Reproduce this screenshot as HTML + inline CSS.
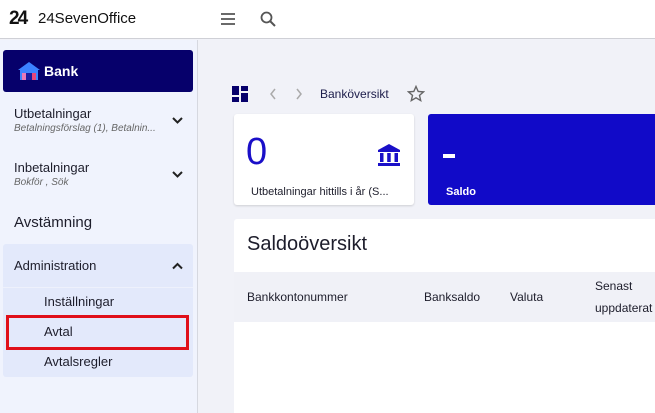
<!DOCTYPE html>
<html><head><meta charset="utf-8"><style>
*{margin:0;padding:0;box-sizing:border-box}
body{width:655px;height:413px;overflow:hidden;font-family:"Liberation Sans",sans-serif;background:#f1f2f8;position:relative;color:#1d1d2b}
.a{position:absolute;white-space:nowrap}
</style></head><body>
<div class="a" style="left:0;top:0;width:655px;height:39px;background:#fff;border-bottom:1px solid #cfd0d6"></div>
<div class="a" style="left:9px;top:8px;font-weight:bold;font-size:19px;letter-spacing:-2px;color:#111">24</div>
<div class="a" style="left:38px;top:10px;font-size:15px;color:#111">24SevenOffice</div>
<svg class="a" style="left:220px;top:12px" width="16" height="14"><path d="M1 2h14M1 7h14M1 12h14" stroke="#555" stroke-width="1.8"/></svg>
<svg class="a" style="left:260px;top:11px" width="16" height="16"><circle cx="6.5" cy="6.5" r="5" stroke="#555" stroke-width="1.8" fill="none"/><path d="M10 10l5 5" stroke="#555" stroke-width="2"/></svg>

<div class="a" style="left:0;top:40px;width:198px;height:373px;background:#f0f3fd;border-right:1px solid #d6d8e0"></div>
<div class="a" style="left:3px;top:50px;width:190px;height:42px;background:#06006b;border-radius:3px"></div>
<svg class="a" style="left:17px;top:61px" width="24" height="20"><path d="M1 9L12 1l11 8z" fill="#3c82ff"/><rect x="3" y="9" width="18" height="10" fill="#3c82ff"/><rect x="5" y="12" width="4" height="7" fill="#e879b8"/><rect x="15" y="12" width="4" height="7" fill="#e8457a"/><rect x="9" y="12" width="6" height="7" fill="#1a1aa0"/></svg>
<div class="a" style="left:44px;top:63px;font-size:14px;color:#fff;font-weight:bold">Bank</div>

<div class="a" style="left:14px;top:106px;font-size:13px">Utbetalningar</div>
<div class="a" style="left:14px;top:123px;font-size:10px;font-style:italic;color:#666">Betalningsförslag (1), Betalnin...</div>
<svg class="a" style="left:172px;top:117px" width="11" height="8"><path d="M1 1l4.5 4.5L10 1" stroke="#222" stroke-width="2" fill="none"/></svg>
<div class="a" style="left:14px;top:160px;font-size:13px">Inbetalningar</div>
<div class="a" style="left:14px;top:177px;font-size:10px;font-style:italic;color:#666">Bokför , Sök</div>
<svg class="a" style="left:172px;top:171px" width="11" height="8"><path d="M1 1l4.5 4.5L10 1" stroke="#222" stroke-width="2" fill="none"/></svg>
<div class="a" style="left:14px;top:214px;font-size:15px">Avstämning</div>

<div class="a" style="left:3px;top:244px;width:190px;height:133px;background:#e3e9fb;border-radius:3px"></div>
<div class="a" style="left:3px;top:287px;width:190px;height:1px;background:#eef1fc"></div>
<div class="a" style="left:14px;top:258px;font-size:13px">Administration</div>
<svg class="a" style="left:172px;top:262px" width="11" height="8"><path d="M1 6.5L5.5 2 10 6.5" stroke="#222" stroke-width="2" fill="none"/></svg>
<div class="a" style="left:44px;top:294px;font-size:13px">Inställningar</div>
<div class="a" style="left:6px;top:315px;width:183px;height:35px;border:3px solid #e0101a"></div>
<div class="a" style="left:44px;top:324px;font-size:13px">Avtal</div>
<div class="a" style="left:44px;top:354px;font-size:13px">Avtalsregler</div>

<svg class="a" style="left:232px;top:86px" width="16" height="16"><rect x="0" y="0" width="7" height="9" fill="#06006b"/><rect x="9" y="0" width="7" height="5" fill="#06006b"/><rect x="0" y="11" width="7" height="5" fill="#06006b"/><rect x="9" y="7" width="7" height="9" fill="#06006b"/></svg>
<svg class="a" style="left:268px;top:88px" width="40" height="12"><path d="M7 1L3 6l4 5M29 1l4 5-4 5" stroke="#aaa" stroke-width="1.5" fill="none"/></svg>
<div class="a" style="left:320px;top:87px;font-size:12px;color:#1c1c4a">Banköversikt</div>
<svg class="a" style="left:407px;top:85px" width="18" height="18"><path d="M9 1.5l2.2 5 5.3.4-4 3.5 1.2 5.2L9 12.8l-4.7 2.8 1.2-5.2-4-3.5 5.3-.4z" stroke="#666" stroke-width="1.4" fill="none"/></svg>

<div class="a" style="left:234px;top:114px;width:180px;height:91px;background:#fff;border-radius:3px;box-shadow:0 1px 2px rgba(0,0,0,.15)"></div>
<div class="a" style="left:246px;top:131px;font-size:38px;color:#1a0fc8">0</div>
<svg class="a" style="left:377px;top:143px" width="24" height="24"><path d="M12 1L1 7v2h22V7z" fill="#1a0fc8"/><rect x="3" y="10" width="3.5" height="9" fill="#1a0fc8"/><rect x="10.2" y="10" width="3.5" height="9" fill="#1a0fc8"/><rect x="17.5" y="10" width="3.5" height="9" fill="#1a0fc8"/><rect x="1" y="20" width="22" height="3" fill="#1a0fc8"/></svg>
<div class="a" style="left:251px;top:186px;font-size:11px">Utbetalningar hittills i år (S...</div>
<div class="a" style="left:428px;top:114px;width:227px;height:91px;background:#110ac8;border-radius:3px 0 0 3px"></div>
<div class="a" style="left:443px;top:154px;width:12px;height:4px;background:#fff"></div>
<div class="a" style="left:446px;top:186px;font-size:11px;color:#fff;font-weight:bold">Saldo</div>

<div class="a" style="left:234px;top:219px;width:421px;height:194px;background:#fff;border-radius:3px 0 0 0"></div>
<div class="a" style="left:247px;top:233px;font-size:20px;color:#1d1d2b">Saldoöversikt</div>
<div class="a" style="left:234px;top:272px;width:421px;height:50px;background:#f0f1f7"></div>
<div class="a" style="left:247px;top:290px;font-size:12px">Bankkontonummer</div>
<div class="a" style="left:424px;top:290px;font-size:12px">Banksaldo</div>
<div class="a" style="left:510px;top:290px;font-size:12px">Valuta</div>
<div class="a" style="left:595px;top:279px;font-size:12px">Senast</div>
<div class="a" style="left:595px;top:301px;font-size:12px">uppdaterat</div>
</body></html>
